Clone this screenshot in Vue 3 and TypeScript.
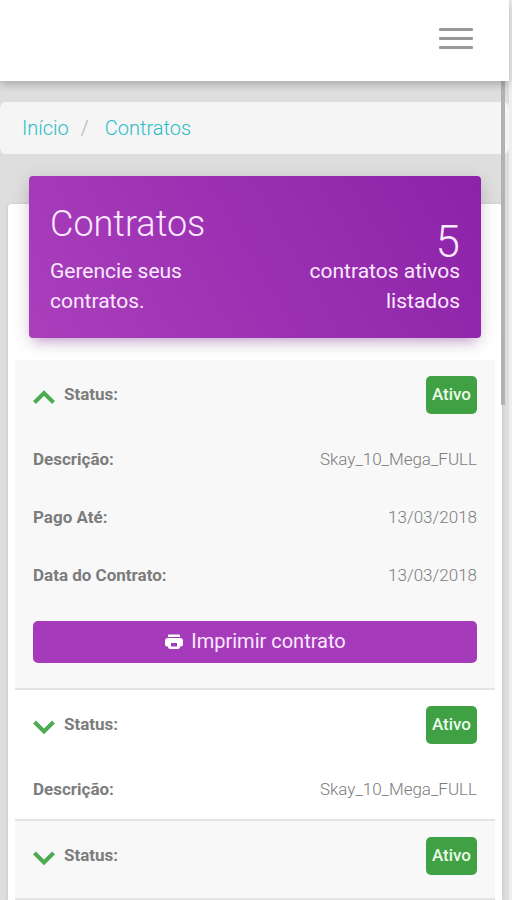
<script setup lang="ts">
import { ref } from 'vue'

interface Field {
  label: string
  value: string
}

interface Contract {
  id: number
  status: string
  open: boolean
  summary: Field[]
  details: Field[]
}

const contracts = ref<Contract[]>([
  {
    id: 1,
    status: 'Ativo',
    open: true,
    summary: [{ label: 'Descrição:', value: 'Skay_10_Mega_FULL' }],
    details: [
      { label: 'Pago Até:', value: '13/03/2018' },
      { label: 'Data do Contrato:', value: '13/03/2018' },
    ],
  },
  {
    id: 2,
    status: 'Ativo',
    open: false,
    summary: [{ label: 'Descrição:', value: 'Skay_10_Mega_FULL' }],
    details: [],
  },
  { id: 3, status: 'Ativo', open: false, summary: [], details: [] },
])

const fieldsOf = (c: Contract): Field[] => (c.open ? [...c.summary, ...c.details] : c.summary)
</script>

<template>
  <div class="page">
    <header class="navbar">
      <button class="menu" type="button" aria-label="Menu">
        <span></span><span></span><span></span>
      </button>
    </header>

    <div class="body">
      <nav class="breadcrumb">
        <a href="#">Início</a>
        <span class="slash">/</span>
        <a href="#">Contratos</a>
      </nav>

      <main class="card">
        <div class="banner">
          <div class="intro">
            <h1>Contratos</h1>
            <p>Gerencie seus contratos.</p>
          </div>
          <div class="total">
            <strong>5</strong>
            <p>contratos ativos listados</p>
          </div>
        </div>

        <div class="list">
          <section v-for="c in contracts" :key="c.id" class="item">
            <div class="row status">
              <button class="toggle" type="button" :aria-expanded="c.open" @click="c.open = !c.open">
                <svg viewBox="0 0 24 16" width="24" height="16" aria-hidden="true">
                  <path :d="c.open ? 'M1.500 13.500 L11 4 L20.500 13.500' : 'M1.500 3 L11 12.500 L20.500 3'" />
                </svg>
                <span class="label">Status:</span>
              </button>
              <span class="badge">{{ c.status }}</span>
            </div>
            <div v-for="f in fieldsOf(c)" :key="f.label" class="row">
              <span class="label">{{ f.label }}</span>
              <span class="value">{{ f.value }}</span>
            </div>
            <div v-if="c.open" class="action">
              <button class="print" type="button">
                <svg viewBox="0 0 20 16" width="20" height="16" aria-hidden="true">
                  <path
                    fill-rule="evenodd"
                    d="M5 0.500h10a1 1 0 0 1 1 1v1.500H4V1.500a1 1 0 0 1 1-1z M4 4h12a3 3 0 0 1 3 3v3.500a2 2 0 0 1-2 2h-1a2.500 2.500 0 0 1-2.500 2.500h-7A2.500 2.500 0 0 1 4 12.500H3a2 2 0 0 1-2-2V7a3 3 0 0 1 3-3z M7 9v3.500h6V9z"
                  />
                </svg>
                Imprimir contrato
              </button>
            </div>
          </section>
        </div>
      </main>
    </div>
    <div class="scroll-thumb"></div>
  </div>
</template>

<style>
body {
  background: #dedede;
}
</style>

<style scoped>
* {
  box-sizing: border-box;
}

.page {
  position: relative;
  display: flex;
  flex-direction: column;
  min-height: 100vh;
  border-right: 3px solid #efefef;
  background: #dedede;
  font-family: Roboto, "Liberation Sans", sans-serif;
  font-weight: 300;
}

button {
  border: 0;
  background: none;
  font: inherit;
  color: inherit;
  cursor: pointer;
}

h1,
p {
  margin: 0;
}

.navbar {
  z-index: 1;
  display: flex;
  align-items: center;
  justify-content: flex-end;
  height: 81px;
  padding: 0 36px 4px 0;
  background: #fff;
  box-shadow: 0 3px 9px rgba(0, 0, 0, 0.26);
}

.menu {
  display: grid;
  gap: 6px;
  width: 34px;
  padding: 0;
}

.menu span {
  height: 3px;
  border-radius: 1px;
  background: #989898;
}

.body {
  display: flex;
  flex: 1;
  flex-direction: column;
  padding-top: 21px;
}

.breadcrumb {
  display: flex;
  align-items: center;
  height: 52px;
  padding: 0 22px;
  border-radius: 6px;
  background: #f5f5f5;
  font-size: 20px;
}

.breadcrumb a {
  color: #2bbcc8;
  text-decoration: none;
}

.slash {
  padding: 0 16px 0 12px;
  color: #b0b0b0;
}

.card {
  display: flex;
  flex: 1;
  flex-direction: column;
  margin: 50px 7px 0 8px;
  padding: 0 7px;
  border-radius: 4px 4px 0 0;
  background: #fff;
  box-shadow: 0 1px 4px rgba(0, 0, 0, 0.14);
}

.banner {
  display: flex;
  justify-content: space-between;
  height: 162px;
  margin: -28px 14px 22px;
  padding: 26px 21px 0;
  border-radius: 4px;
  background: linear-gradient(60deg, #a93fbb, #8c22a8);
  box-shadow: 0 4px 20px rgba(0, 0, 0, 0.12), 0 7px 12px -5px rgba(156, 39, 176, 0.4);
  color: #fbe9ff;
}

.banner p {
  font-size: 21px;
  font-weight: 400;
  line-height: 30px;
}

.intro {
  width: 150px;
}

.intro h1 {
  margin-bottom: 10px;
  font-size: 36px;
  font-weight: 300;
  line-height: 44px;
}

.total {
  display: flex;
  flex-direction: column;
  width: 160px;
  text-align: right;
}

.total strong {
  padding-top: 26px;
  font-size: 44px;
  font-weight: 300;
  line-height: 28px;
}

.list {
  display: flex;
  flex: 1;
  flex-direction: column;
}

.item {
  border-bottom: 2px solid #e4e4e4;
}

.item:nth-child(odd) {
  background: #f8f8f8;
}

.item:last-child {
  flex: 1;
}

.row {
  display: flex;
  align-items: center;
  justify-content: space-between;
  height: 58px;
  padding: 0 18px 2px;
  color: #7c7c7c;
  font-size: 17px;
}

.status {
  height: 71px;
}

.label {
  color: #7c7c7c;
  font-weight: 700;
}

.toggle {
  display: flex;
  align-items: center;
  gap: 7px;
  padding: 0 0 2px;
}

.toggle svg {
  margin-top: 6px;
  fill: none;
  stroke: #4cab51;
  stroke-width: 4;
}

.badge {
  height: 38px;
  padding: 0 6px;
  border-radius: 5px;
  background: #40a044;
  color: #e9fbe9;
  font-weight: 500;
  line-height: 36px;
}

.action {
  padding: 16px 18px 25px;
}

.print {
  display: flex;
  align-items: center;
  justify-content: center;
  gap: 7px;
  width: 100%;
  height: 42px;
  padding: 0 0 2px;
  border-radius: 5px;
  background: #a53aba;
  color: #fbe9ff;
  font-size: 20px;
  font-weight: 400;
}

.print svg {
  margin-top: 2px;
  fill: #fff;
}

.scroll-thumb {
  position: absolute;
  top: 81px;
  right: 4px;
  width: 4px;
  height: 324px;
  background: #b2b2b2;
}
</style>
